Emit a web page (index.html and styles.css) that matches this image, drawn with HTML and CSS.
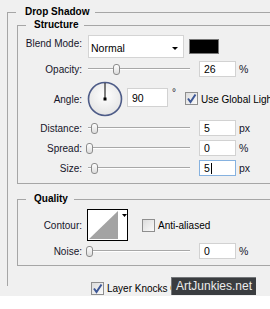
FILE: index.html
```html
<!DOCTYPE html>
<html lang="en">
<head>
  <meta charset="UTF-8" />
  <title>Drop Shadow</title>
  <link rel="stylesheet" href="styles.css">
</head>
<body>
  <div class="panel">
    <fieldset class="group outer">
      <legend>Drop Shadow</legend>

      <fieldset class="group inner structure">
        <legend>Structure</legend>

        <div class="row row-blend">
          <span class="label">Blend Mode:</span>
          <div class="select">Normal<span class="caret"></span></div>
          <div class="swatch"></div>
        </div>

        <div class="row row-slider row-first">
          <span class="label">Opacity:</span>
          <div class="slider"><span class="thumb" style="left:27px"></span></div>
          <span class="field">26</span><span class="unit">%</span>
        </div>

        <div class="row row-angle">
          <span class="label">Angle:</span>
          <svg class="dial" width="36" height="36" viewBox="0 0 36 36">
            <defs>
              <radialGradient id="dialFill" cx="50%" cy="40%" r="60%">
                <stop offset="0" stop-color="#ffffff"/>
                <stop offset="1" stop-color="#e4e4e4"/>
              </radialGradient>
            </defs>
            <circle cx="18" cy="18" r="16.5" fill="url(#dialFill)" stroke="#4e5c88" stroke-width="1.6"/>
            <line x1="18" y1="18" x2="18" y2="2" stroke="#000" stroke-width="1"/>
            <rect x="16.5" y="16.5" width="3" height="3" fill="#000"/>
          </svg>
          <span class="field field-angle">90</span>
          <span class="degree">°</span>
          <span class="check checked">
            <svg width="13" height="13" viewBox="0 0 13 13"><path d="M3 6.5 L5.5 10 L10.5 2.5" fill="none" stroke="#3d5796" stroke-width="2"/></svg>
          </span>
          <span class="check-text">Use Global Light</span>
        </div>

        <div class="row row-slider">
          <span class="label">Distance:</span>
          <div class="slider"><span class="thumb" style="left:5px"></span></div>
          <span class="field">5</span><span class="unit">px</span>
        </div>

        <div class="row row-slider">
          <span class="label">Spread:</span>
          <div class="slider"><span class="thumb" style="left:0px"></span></div>
          <span class="field">0</span><span class="unit">%</span>
        </div>

        <div class="row row-slider">
          <span class="label">Size:</span>
          <div class="slider"><span class="thumb" style="left:5px"></span></div>
          <span class="field field-focus">5<span class="cursor"></span></span><span class="unit">px</span>
        </div>
      </fieldset>

      <fieldset class="group inner quality">
        <legend>Quality</legend>

        <div class="row row-contour">
          <span class="label">Contour:</span>
          <svg class="contour" width="41" height="32" viewBox="0 0 41 32">
            <rect x="0.5" y="0.5" width="40" height="31" fill="#fff" stroke="#000"/>
            <polygon points="2,30 31,2 31,30" fill="#a3a3a3"/>
            <polygon points="35,5 40,5 37.5,8" fill="#000"/>
          </svg>
          <span class="check check-aa"></span>
          <span class="check-text">Anti-aliased</span>
        </div>

        <div class="row row-slider">
          <span class="label">Noise:</span>
          <div class="slider"><span class="thumb" style="left:0px"></span></div>
          <span class="field">0</span><span class="unit">%</span>
        </div>
      </fieldset>

      <div class="row row-knock">
        <span class="check checked">
          <svg width="13" height="13" viewBox="0 0 13 13"><path d="M3 6.5 L5.5 10 L10.5 2.5" fill="none" stroke="#3d5796" stroke-width="2"/></svg>
        </span>
        <span class="check-text">Layer Knocks Out Drop Shadow</span>
      </div>
    </fieldset>

    <div class="watermark">ArtJunkies.net</div>
  </div>
</body>
</html>
```

FILE: styles.css
```css
body {
  margin: 0;
  background: #ffffff;
  font-family: "Liberation Sans", Arial, sans-serif;
  font-size: 10px;
  color: #15152a;
  overflow: hidden;
}

.panel {
  position: relative;
  width: 270px;
  height: 296px;
  background: #f0f0f0;
  overflow: hidden;
}

/* group boxes */
.group {
  border: 1px solid #a6a6a6;
  padding: 0;
  min-width: 0;
}

.group legend {
  font-weight: bold;
  line-height: 12px;
  color: #000;
}

.outer {
  margin: 6px 0 0 7px;
  width: 330px;
  height: 280px;
  border-bottom: none;
  box-sizing: border-box;
}

.outer > legend {
  margin-left: 8px;
  padding: 0 6px 0 9px;
}

.inner {
  margin: 1px 0 0 9px;
  width: 320px;
}

.inner > legend {
  margin-left: 8px;
  padding: 0 6px 0 8px;
}

.structure {
  padding: 4px 0 5px;
}

.quality {
  margin-top: 9px;
  padding: 4px 0 4px;
}

/* rows */
.row {
  display: flex;
  align-items: center;
}

.label {
  width: 64px;
  text-align: right;
  flex: none;
}

.row-blend {
  height: 23px;
}

.row-blend .label {
  margin-bottom: 6px;
}

.row-slider {
  height: 20px;
}

.row-first {
  height: 22px;
}

.row-angle {
  height: 38px;
}

.row-contour {
  height: 32px;
}

/* controls */
.select {
  position: relative;
  margin-left: 6px;
  width: 96px;
  height: 23px;
  box-sizing: border-box;
  border: 1px solid #d4d4d4;
  background: #fff;
  padding: 6px 0 0 2px;
  font-size: 10.5px;
  color: #000;
}

.caret {
  position: absolute;
  right: 5px;
  top: 11px;
  border-left: 3px solid transparent;
  border-right: 3px solid transparent;
  border-top: 3px solid #000;
}

.swatch {
  margin-left: 5px;
  width: 30px;
  height: 15px;
  box-sizing: border-box;
  border: 1px solid #777;
  background: #000;
}

.slider {
  position: relative;
  margin-left: 4px;
  width: 104px;
  height: 11px;
  flex: none;
}

.slider::before {
  content: '';
  position: absolute;
  left: 2px;
  right: 0;
  top: 4px;
  border-top: 1px solid #a8a8a8;
  border-bottom: 1px solid #ffffff;
}

.thumb {
  position: absolute;
  top: 0;
  width: 7px;
  height: 11px;
  box-sizing: border-box;
  border: 1px solid #8c8c8c;
  border-radius: 3px;
  background: linear-gradient(#ffffff, #dcdcdc);
}

.field {
  margin-left: 9px;
  width: 37px;
  height: 16px;
  box-sizing: border-box;
  border: 1px solid #d2d2d2;
  background: #fff;
  padding: 2px 0 0 4px;
  font-size: 10.5px;
  line-height: 11px;
  color: #000;
  flex: none;
}

.field-focus {
  border-color: #86b2e0;
  display: flex;
  align-items: flex-start;
}

.cursor {
  display: inline-block;
  width: 1px;
  height: 11px;
  background: #000;
  margin-left: 1px;
}

.unit {
  margin-left: 3px;
  font-size: 10.5px;
}

.dial {
  margin-left: 5px;
  flex: none;
}

.field-angle {
  margin-left: 4px;
  width: 41px;
  height: 19px;
  padding-top: 4px;
  align-self: flex-start;
  margin-top: 8px;
}

.degree {
  margin-left: 4px;
  align-self: flex-start;
  margin-top: 7px;
}

.check {
  width: 13px;
  height: 13px;
  box-sizing: border-box;
  border: 1px solid #8e8e8e;
  background: linear-gradient(135deg, #dcdcdc, #fafafa);
  flex: none;
  position: relative;
}

.check svg {
  position: absolute;
  left: -1px;
  top: -1px;
}

.row-angle .check {
  margin-left: 9px;
  margin-top: -1px;
}

.check-text {
  margin-left: 3px;
  white-space: nowrap;
  color: #000;
}

.contour {
  margin-left: 5px;
  flex: none;
}

.check-aa {
  margin-left: 14px;
}

.row-knock {
  margin-top: 15px;
  height: 14px;
}

.row-knock .check {
  margin-left: 83px;
}

.watermark {
  position: absolute;
  left: 171px;
  top: 277px;
  width: 85px;
  height: 18px;
  box-sizing: border-box;
  background: #3a3d40;
  border-top: 1px solid #74777a;
  border-left: 1px solid #74777a;
  color: #ececec;
  font-size: 12px;
  line-height: 17px;
  text-align: center;
}
```
